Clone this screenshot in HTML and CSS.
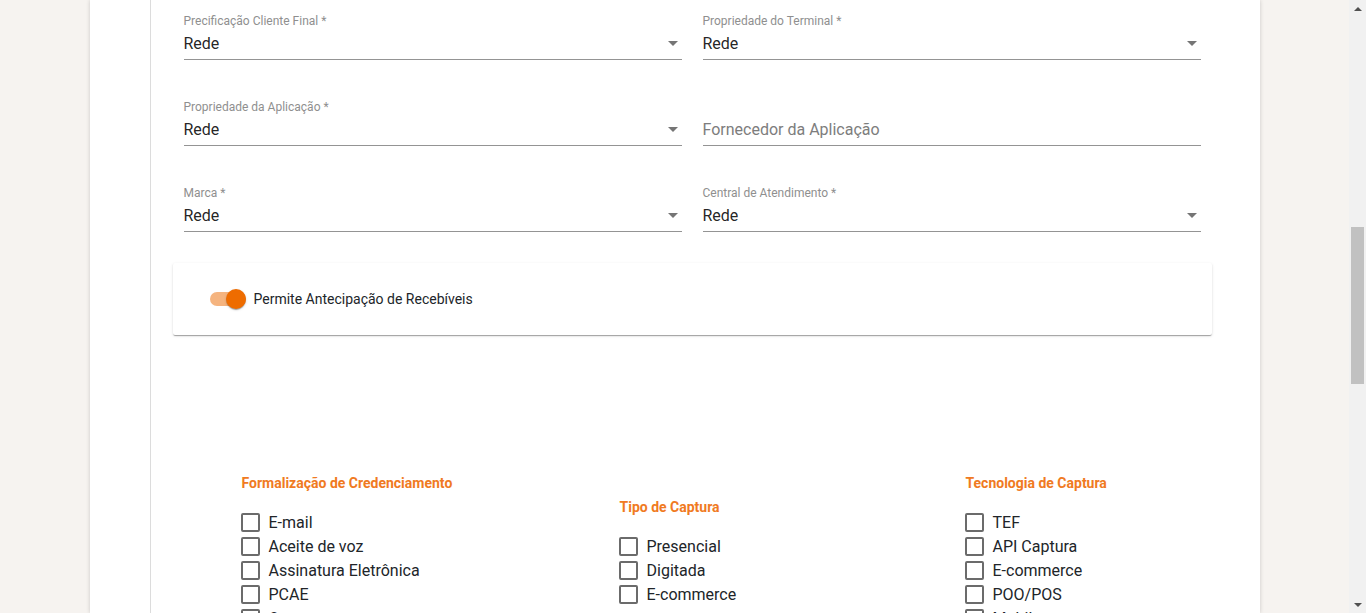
FILE: index.html
```html
<!DOCTYPE html>
<html lang="pt-BR">
<head>
<meta charset="utf-8">
<title>Formulário</title>
<link rel="stylesheet" href="styles.css">
</head>
<body>
<div class="viewport">
  <main class="page">
    <section class="panel">
      <div class="inner">
        <div class="content">
          <div class="fields">
            <div class="field">
              <div class="label">Precificação Cliente Final *</div>
              <div class="select"><span class="value">Rede</span><span class="arrow"></span></div>
            </div>
            <div class="field">
              <div class="label">Propriedade do Terminal *</div>
              <div class="select"><span class="value">Rede</span><span class="arrow"></span></div>
            </div>
            <div class="field">
              <div class="label">Propriedade da Aplicação *</div>
              <div class="select"><span class="value">Rede</span><span class="arrow"></span></div>
            </div>
            <div class="field">
              <div class="label"></div>
              <div class="select"><span class="placeholder">Fornecedor da Aplicação</span></div>
            </div>
            <div class="field">
              <div class="label">Marca *</div>
              <div class="select"><span class="value">Rede</span><span class="arrow"></span></div>
            </div>
            <div class="field">
              <div class="label">Central de Atendimento *</div>
              <div class="select"><span class="value">Rede</span><span class="arrow"></span></div>
            </div>
          </div>

          <div class="card">
            <div class="toggle">
              <span class="track"></span>
              <span class="thumb"></span>
            </div>
            <span class="toggle-label">Permite Antecipação de Recebíveis</span>
          </div>

          <div class="groups">
            <div class="group">
              <div class="group-title">Formalização de Credenciamento</div>
              <label class="check"><span class="box"></span><span class="check-text">E-mail</span></label>
              <label class="check"><span class="box"></span><span class="check-text">Aceite de voz</span></label>
              <label class="check"><span class="box"></span><span class="check-text">Assinatura Eletrônica</span></label>
              <label class="check"><span class="box"></span><span class="check-text">PCAE</span></label>
              <label class="check"><span class="box"></span><span class="check-text">Outros</span></label>
            </div>
            <div class="group">
              <div class="group-title">Tipo de Captura</div>
              <label class="check"><span class="box"></span><span class="check-text">Presencial</span></label>
              <label class="check"><span class="box"></span><span class="check-text">Digitada</span></label>
              <label class="check"><span class="box"></span><span class="check-text">E-commerce</span></label>
            </div>
            <div class="group">
              <div class="group-title">Tecnologia de Captura</div>
              <label class="check"><span class="box"></span><span class="check-text">TEF</span></label>
              <label class="check"><span class="box"></span><span class="check-text">API Captura</span></label>
              <label class="check"><span class="box"></span><span class="check-text">E-commerce</span></label>
              <label class="check"><span class="box"></span><span class="check-text">POO/POS</span></label>
              <label class="check"><span class="box"></span><span class="check-text">Mobile</span></label>
            </div>
          </div>
        </div>
      </div>
    </section>
  </main>
  <div class="scrollbar">
    <div class="sb-button"><span class="sb-up"></span></div>
    <div class="sb-track"><div class="sb-thumb"></div></div>
    <div class="sb-button"><span class="sb-down"></span></div>
  </div>
</div>
</body>
</html>
```
FILE: styles.css
```css
* { box-sizing: border-box; }

html, body {
  margin: 0;
  padding: 0;
  height: 613px;
  overflow: hidden;
}

body {
  background: #f6f3f0;
  font-family: Roboto, "Liberation Sans", Arial, sans-serif;
  color: rgba(0, 0, 0, 0.87);
}

.viewport {
  display: flex;
  height: 613px;
}

.page {
  flex: 1;
  display: flex;
  justify-content: center;
  overflow: hidden;
}

.panel {
  width: 1170px;
  height: 613px;
  background: #fff;
  box-shadow: 0 0 4px rgba(0, 0, 0, 0.18);
  padding-left: 60px;
}

.inner {
  height: 100%;
  border-left: 1px solid #dcdcdc;
  padding-left: 22px;
  padding-top: 14px;
}

.content {
  width: 1039px;
}

.fields {
  display: grid;
  grid-template-columns: 498px 498px;
  column-gap: 21px;
  row-gap: 40px;
  padding-left: 11px;
}

.field {
  display: flex;
  flex-direction: column;
}

.label {
  font-size: 12px;
  line-height: 14px;
  height: 14px;
  color: #8f8f8f;
  white-space: nowrap;
}

.select {
  display: flex;
  align-items: center;
  justify-content: space-between;
  padding: 6px 0 5px;
  font-size: 16px;
  line-height: 20px;
  height: 32px;
  border-bottom: 1px solid #949494;
}

.value { color: rgba(0, 0, 0, 0.87); }

.placeholder { color: #7d7d7d; }

.arrow {
  width: 0;
  height: 0;
  border-left: 5px solid transparent;
  border-right: 5px solid transparent;
  border-top: 5px solid #757575;
  margin-right: 4px;
  margin-top: -2px;
}

.card {
  margin-top: 31px;
  height: 72px;
  background: #fff;
  border-radius: 2px;
  box-shadow: 0 2px 1px -1px rgba(0, 0, 0, 0.2), 0 1px 1px 0 rgba(0, 0, 0, 0.14), 0 1px 3px 0 rgba(0, 0, 0, 0.12);
  display: flex;
  align-items: center;
  padding-left: 37px;
}

.toggle {
  position: relative;
  width: 36px;
  height: 20px;
  flex: none;
}

.track {
  position: absolute;
  left: 0;
  top: 3px;
  width: 36px;
  height: 14px;
  border-radius: 7px;
  background: #f5b47f;
}

.thumb {
  position: absolute;
  right: 0;
  top: 0;
  width: 20px;
  height: 20px;
  border-radius: 50%;
  background: #ee6c00;
  box-shadow: 0 2px 1px -1px rgba(0, 0, 0, 0.2), 0 1px 1px 0 rgba(0, 0, 0, 0.14), 0 1px 3px 0 rgba(0, 0, 0, 0.12);
}

.toggle-label {
  margin-left: 8px;
  font-size: 14px;
  line-height: 20px;
  color: #212529;
}

.groups {
  margin-top: 140px;
  display: grid;
  grid-template-columns: 378px 346px 1fr;
  align-items: center;
  padding-left: 68px;
}

.group {
  display: flex;
  flex-direction: column;
}

.group-title {
  font-size: 14px;
  line-height: 16px;
  font-weight: 700;
  color: #f07a22;
  margin-bottom: 19.5px;
  padding-left: 1px;
  white-space: nowrap;
}

.check {
  display: flex;
  align-items: center;
  height: 24px;
}

.box {
  width: 19px;
  height: 19px;
  border: 2px solid #6b6b6b;
  border-radius: 2px;
  margin-right: 9px;
  flex: none;
}

.check-text {
  font-size: 16px;
  line-height: 20px;
  color: #212529;
  white-space: nowrap;
}

.scrollbar {
  width: 17px;
  flex: none;
  background: #f1f1f1;
  display: flex;
  flex-direction: column;
}

.sb-button {
  height: 17px;
  display: flex;
  align-items: center;
  justify-content: center;
  flex: none;
}

.sb-up {
  width: 0;
  height: 0;
  border-left: 4px solid transparent;
  border-right: 4px solid transparent;
  border-bottom: 4px solid #505050;
}

.sb-down {
  width: 0;
  height: 0;
  border-left: 4px solid transparent;
  border-right: 4px solid transparent;
  border-top: 4px solid #505050;
}

.sb-track {
  flex: 1;
  padding-top: 210px;
}

.sb-thumb {
  width: 13px;
  height: 157px;
  margin-left: 2px;
  background: #c1c1c1;
}
```
